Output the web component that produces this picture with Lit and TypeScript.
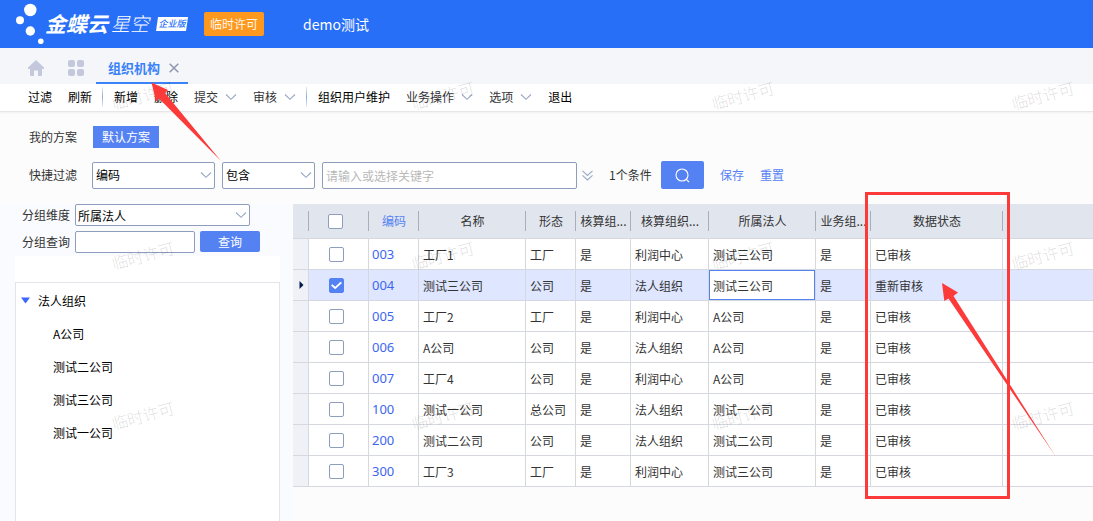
import { LitElement, html, css, svg, nothing } from "lit";
import { customElement, state } from "lit/decorators.js";
import { classMap } from "lit/directives/class-map.js";

interface OrgRow {
  code: string;
  name: string;
  form: string;
  calc: string;
  calcType: string;
  legal: string;
  business: string;
  status: string;
}

const row = (code: string, name: string, form: string, calcType: string, legal: string, status = "已审核"): OrgRow => ({
  code, name, form, calc: "是", calcType, legal, business: "是", status,
});

const ROWS: OrgRow[] = [
  row("003", "工厂1", "工厂", "利润中心", "测试三公司"),
  row("004", "测试三公司", "公司", "法人组织", "测试三公司", "重新审核"),
  row("005", "工厂2", "工厂", "利润中心", "A公司"),
  row("006", "A公司", "公司", "法人组织", "A公司"),
  row("007", "工厂4", "公司", "利润中心", "A公司"),
  row("100", "测试一公司", "总公司", "法人组织", "测试一公司"),
  row("200", "测试二公司", "公司", "法人组织", "测试二公司"),
  row("300", "工厂3", "工厂", "利润中心", "测试三公司"),
];

const TREE = ["A公司", "测试二公司", "测试三公司", "测试一公司"];

const MENU: Array<{ label: string; more?: boolean; strong?: boolean; sep?: boolean }> = [
  { label: "过滤", strong: true },
  { label: "刷新", strong: true, sep: true },
  { label: "新增", strong: true },
  { label: "删除", strong: true },
  { label: "提交", more: true },
  { label: "审核", more: true, sep: true },
  { label: "组织用户维护", strong: true },
  { label: "业务操作", more: true },
  { label: "选项", more: true },
  { label: "退出", strong: true },
];

const MARKS = [0, 1, 2].flatMap((r) => [0, 1, 2, 3].map((c) => ({ x: 143 + c * 300, y: 96 + r * 160 })));

const chevron = html`<svg class="chevron" width="12" height="8" viewBox="0 0 12 8" aria-hidden="true">
  <path d="M1 1.5 6 6.3 11 1.5" fill="none" stroke="#9aa8c6" stroke-width="1.1" />
</svg>`;

@customElement("app-root")
export class AppRoot extends LitElement {
  @state() private selected = new Set<string>(["004"]);

  static styles = css`
    :host {
      display: flex;
      flex-direction: column;
      position: relative;
      min-height: 100vh;
      overflow: hidden;
      box-sizing: border-box;
      background: #fcfcfd;
      color: #333;
      font-family: "Noto Sans CJK SC", sans-serif;
      font-size: 12px;
      line-height: 18px;
    }
    * { box-sizing: border-box; }
    button, input, select { font: inherit; color: inherit; margin: 0; }
    button { border: 0; background: none; padding: 0; cursor: pointer; white-space: nowrap; }
    a { text-decoration: none; }

    .top {
      display: flex;
      align-items: center;
      height: 48px;
      padding-left: 15px;
      background: #286ff8;
      color: #fff;
    }
    .dots { flex: none; }
    .brand { display: flex; align-items: center; font-style: italic; font-size: 21px; line-height: 28px; white-space: nowrap; padding-bottom: 2px; }
    .brand-name { font-weight: 700; }
    .brand-sub { margin-left: 3px; font-size: 19px; font-weight: 300; }
    .edition {
      margin-left: 7px;
      margin-top: 2px;
      width: 32px;
      background: #fff;
      color: #286ff8;
      font-size: 9px;
      line-height: 14px;
      font-weight: 500;
      text-align: center;
      clip-path: polygon(2px 0, 100% 0, 30px 100%, 0 100%);
    }
    .license {
      margin-left: 16px;
      padding: 3px 6px;
      border-radius: 2px;
      background: #ff981f;
      color: #fff6e6;
    }
    .tenant { margin-left: 39px; font-size: 14px; line-height: 20px; }

    .tabs { display: flex; height: 36px; background: #f5f6fa; padding-left: 28px; align-items: stretch; }
    .tab-icon { display: flex; align-items: center; margin-right: 24px; padding-top: 4px; }
    .tab {
      display: flex;
      align-items: center;
      gap: 9px;
      width: 92px;
      margin-left: -12px;
      padding: 6px 9px 0 12px;
      border-bottom: 2px solid #3a82f8;
      color: #3a82f8;
      font-size: 13px;
      font-weight: 700;
    }
    .close { display: flex; }

    .toolbar {
      display: flex;
      align-items: center;
      gap: 16px;
      height: 28px;
      padding: 0 0 2px 28px;
      background: #fff;
      border-bottom: 1px solid #e6e6e8;
      box-shadow: 0 1px 2px #0000000d;
    }
    .menu { display: flex; align-items: center; gap: 7px; color: #333; }
    .strong { color: #000; }
    .sep { width: 1px; height: 20px; margin: 0 -5px 0 -6px; background: linear-gradient(#e4edf8, #8bacd6, #e4edf8); }
    .chevron { flex: none; display: block; }

    .filters { display: grid; gap: 13px; padding: 14px 16px 15px 29px; }
    .line { display: flex; align-items: center; }
    .line-label { width: 63px; flex: none; }
    .scheme { width: 66px; height: 22px; margin-left: 1px; background: #5582f3; color: #fff; }
    .pick { display: grid; align-items: center; flex: none; }
    .pick > * { grid-area: 1 / 1; }
    .pick > .chevron { justify-self: end; margin-right: 3px; pointer-events: none; }
    .box {
      appearance: none;
      display: block;
      width: 100%;
      height: 27px;
      padding: 0 3px;
      border: 1px solid #8f9dbd;
      border-radius: 2px;
      background: #fff;
      color: #000;
      outline: 0;
    }
    .box::placeholder { color: #b9b9b9; opacity: 1; }
    .field { width: 123px; }
    .operator { width: 93px; margin-left: 7px; }
    .keyword { width: 255px; margin-left: 7px; }
    .expand { display: flex; margin-left: 5px; }
    .count { margin-left: 16px; width: 43px; white-space: nowrap; }
    .search { display: grid; place-items: center; width: 43px; height: 28px; margin-left: 9px; border-radius: 2px; background: #5582f3; }
    .link { margin-left: 16px; color: #5582f3; }

    .body { display: flex; flex: 1; align-items: stretch; }
    .side { display: flex; flex-direction: column; width: 293px; flex: none; padding: 0 13px 0 15px; background: #fafbff; }
    .group { display: flex; align-items: flex-start; line-height: 21px; padding-left: 7px; }
    .group-label { width: 53px; }
    .small { height: 22px; padding: 0 2px; }
    .dimension { width: 175px; }
    .lookup { width: 120px; }
    .query { width: 60px; height: 21px; margin-left: 5px; border-radius: 2px; background: #5582f3; color: #fff; }
    .groups { display: grid; gap: 5px; padding-bottom: 3px; }
    .side-bar { height: 26px; background: #fff; }
    .tree { flex: 1; border: 1px solid #e2e4ea; border-bottom: 0; background: #fff; color: #000; padding-top: 1px; }
    .tree-list { list-style: none; margin: 0; padding: 0; }
    .node { display: flex; align-items: center; height: 33px; padding-left: 37px; }
    .root { padding-left: 5px; gap: 8px; }

    .grid-wrap { flex: 1; min-width: 0; }
    .grid { width: 100%; table-layout: fixed; border-collapse: separate; border-spacing: 0; }
    .grid th {
      height: 35px;
      padding: 0;
      border-bottom: 1px solid #d5d8df;
      background: linear-gradient(#a9aeb9, #a9aeb9) right center / 1px 20px no-repeat #e1e5ee;
      font-weight: 400;
      white-space: nowrap;
      overflow: hidden;
    }
    .grid th.last { background: #e1e5ee; }
    .grid td {
      height: 31px;
      padding: 2px 0 0 4px;
      border: solid #d5d8df;
      border-width: 0 1px 1px 0;
      background: #fff;
      white-space: nowrap;
      overflow: hidden;
    }
    .grid td.last { border-right: 0; }
    .grid td.gutter { background: #eff1f6; padding: 0 0 0 6px; }
    .grid .picked td { background: #dfe6ff; }
    .grid .picked td.gutter { background: #eff1f6; }
    .grid .picked td.focus { background: #fff; box-shadow: inset 0 0 0 1px #5582f3; }
    .grid td.code { padding: 0 0 1px 3px; font-family: "Noto Sans", sans-serif; font-size: 13px; }
    .grid td.check { padding: 0 4px 2px 0; text-align: center; }
    .grid th.check { padding: 0 8px 2px 0; }
    .code-link { color: #3d66ee; }
    .sorted { color: #5582f3; }
    .c-gutter { width: 16px; }
    .c-check { width: 60px; }
    .c-50 { width: 50px; }
    .c-55 { width: 55px; }
    .c-78 { width: 78px; }
    .c-107 { width: 107px; }
    .c-132 { width: 132px; }
    .pointer { display: block; }
    .tick {
      appearance: none;
      display: inline-grid;
      place-items: center;
      width: 15px;
      height: 15px;
      border: 1px solid #8f9dbd;
      border-radius: 2px;
      background: #fff;
      vertical-align: middle;
    }
    .tick:checked { background: #5582f3; border-color: #5582f3; }
    .tick:checked::after {
      content: "";
      width: 11px;
      height: 9px;
      background: #fff;
      clip-path: polygon(0 48%, 13% 34%, 38% 62%, 87% 6%, 100% 20%, 38% 90%);
    }

    .overlay { position: absolute; inset: 0; pointer-events: none; }
    .overlay-art { display: block; width: 100%; height: 100%; }
    .mark { font-size: 16px; font-weight: 300; fill: #000; fill-opacity: 0.15; }
  `;

  private toggle(code: string) {
    const next = new Set(this.selected);
    if (!next.delete(code)) next.add(code);
    this.selected = next;
  }

  private header() {
    return html`<header class="top">
      <svg class="dots" width="30" height="48" viewBox="0 0 30 48" fill="#fff" aria-hidden="true">
        <circle cx="15.3" cy="10" r="6.2" /><circle cx="5" cy="20.3" r="4" />
        <circle cx="15.3" cy="31" r="4.7" /><circle cx="25.8" cy="41.3" r="2.8" />
      </svg>
      <div class="brand">
        <span class="brand-name">金蝶云</span><span class="brand-sub">星空</span><span class="edition">企业版</span>
      </div>
      <span class="license">临时许可</span>
      <span class="tenant">demo测试</span>
    </header>`;
  }

  private tabs() {
    return html`<nav class="tabs">
      <button class="tab-icon" aria-label="首页">
        <svg width="16" height="16" viewBox="0 0 16 16" fill="#c3c8dc">
          <path d="M8 0 16 7.6V9H14V15Q14 16 13 16H10V10.5H6V16H3Q2 16 2 15V9H0V7.6Z" />
        </svg>
      </button>
      <button class="tab-icon" aria-label="应用">
        <svg width="16" height="16" viewBox="0 0 16 16" fill="#c3c8dc">
          <rect width="7" height="7" rx="2" /><rect x="9" width="7" height="7" rx="2" />
          <rect y="9" width="7" height="7" rx="2" /><rect x="9" y="9" width="7" height="7" rx="2" />
        </svg>
      </button>
      <div class="tab">
        <span>组织机构</span>
        <button class="close" aria-label="关闭">
          <svg width="10" height="10" viewBox="0 0 10 10"><path d="M.7.7 9.3 9.3M9.3.7.7 9.3" stroke="#8e97ad" stroke-width="1.5" /></svg>
        </button>
      </div>
    </nav>`;
  }

  private filters() {
    return html`<section class="filters">
      <div class="line"><span class="line-label">我的方案</span><button class="scheme">默认方案</button></div>
      <div class="line">
        <label class="line-label" for="field">快捷过滤</label>
        <div class="pick field"><select class="box" id="field"><option>编码</option></select>${chevron}</div>
        <div class="pick operator"><select class="box" aria-label="条件"><option>包含</option></select>${chevron}</div>
        <div class="keyword"><input class="box" aria-label="关键字" placeholder="请输入或选择关键字" /></div>
        <button class="expand" aria-label="展开">
          <svg width="11" height="11" viewBox="0 0 11 11" fill="none" stroke="#9aa8c6" stroke-width="1.1">
            <path d="M.5.8 5.5 5.4 10.5.8M.5 5.4 5.5 10 10.5 5.4" />
          </svg>
        </button>
        <span class="count">1个条件</span>
        <button class="search" aria-label="搜索">
          <svg width="15" height="15" viewBox="0 0 15 15" fill="none" stroke="#fff" stroke-width="1.1">
            <circle cx="7" cy="7" r="6" /><path d="M11.3 11.3 14 14" />
          </svg>
        </button>
        <a class="link" href="#save">保存</a>
        <a class="link" href="#reset">重置</a>
      </div>
    </section>`;
  }

  private side() {
    return html`<aside class="side">
      <div class="groups">
        <div class="group">
          <label class="group-label" for="dimension">分组维度</label>
          <div class="pick dimension"><select class="box small" id="dimension"><option>所属法人</option></select>${chevron}</div>
        </div>
        <div class="group">
          <label class="group-label" for="lookup">分组查询</label>
          <div class="lookup"><input class="box small" id="lookup" /></div>
          <button class="query">查询</button>
        </div>
      </div>
      <div class="side-bar"></div>
      <div class="tree">
        <div class="node root">
          <svg width="9" height="7" viewBox="0 0 9 7"><path d="M0 .5H9L4.5 6.5Z" fill="#3d66ff" /></svg>
          <span>法人组织</span>
        </div>
        <ul class="tree-list">${TREE.map((t) => html`<li class="node">${t}</li>`)}</ul>
      </div>
    </aside>`;
  }

  private grid() {
    return html`<div class="grid-wrap">
      <table class="grid">
        <colgroup>
          <col class="c-gutter" /><col class="c-check" /><col class="c-50" /><col class="c-107" /><col class="c-50" />
          <col class="c-55" /><col class="c-78" /><col class="c-107" /><col class="c-55" /><col class="c-132" /><col />
        </colgroup>
        <thead>
          <tr>
            <th></th>
            <th class="check"><input class="tick" type="checkbox" aria-label="全选" /></th>
            <th class="sorted">编码</th><th>名称</th><th>形态</th><th>核算组...</th><th>核算组织...</th>
            <th>所属法人</th><th>业务组...</th><th>数据状态</th><th class="last"></th>
          </tr>
        </thead>
        <tbody>
          ${ROWS.map((r) => {
            const on = this.selected.has(r.code);
            return html`<tr class=${classMap({ picked: on })}>
              <td class="gutter">${r.code === "004"
                ? html`<svg class="pointer" width="5" height="8" viewBox="0 0 5 8"><path d="M.5 0 4.5 4 .5 8Z" fill="#001a4d" /></svg>`
                : nothing}</td>
              <td class="check"><input class="tick" type="checkbox" aria-label=${r.code} .checked=${on} @change=${() => this.toggle(r.code)} /></td>
              <td class="code"><a class="code-link" href="#${r.code}">${r.code}</a></td>
              <td>${r.name}</td><td>${r.form}</td><td>${r.calc}</td><td>${r.calcType}</td>
              <td class=${classMap({ focus: r.code === "004" })}>${r.legal}</td>
              <td>${r.business}</td><td>${r.status}</td><td class="last"></td>
            </tr>`;
          })}
        </tbody>
      </table>
    </div>`;
  }

  render() {
    return html`
      ${this.header()} ${this.tabs()}
      <div class="toolbar">
        ${MENU.map((m) => html`<button class=${classMap({ menu: true, strong: !!m.strong })}>${m.label}${m.more ? chevron : nothing}</button>
          ${m.sep ? html`<span class="sep"></span>` : nothing}`)}
      </div>
      ${this.filters()}
      <div class="body">${this.side()} ${this.grid()}</div>
      <div class="overlay">
        <svg class="overlay-art" aria-hidden="true">
          ${MARKS.map((m) => svg`<text class="mark" text-anchor="middle" transform="translate(${m.x} ${m.y}) rotate(-15)" y="6">临时许可</text>`)}
          <rect x="866.5" y="193.5" width="142" height="304" fill="none" stroke="#fc3a3a" stroke-width="3" />
          <path d="M151.5 82.5 168 90 165 93 221 161 159 98.500 156 101.500Z" fill="#fc3a3a" />
          <path d="M942 283 958 292.500 953.500 296 1056 457 948.500 298.500 944.300 301Z" fill="#fc3a3a" />
        </svg>
      </div>
    `;
  }
}
